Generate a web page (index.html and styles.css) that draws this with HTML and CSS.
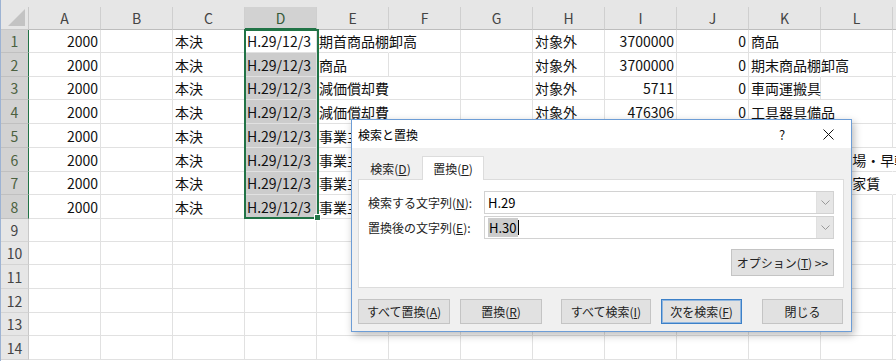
FILE: index.html
```html
<!DOCTYPE html>
<html lang="ja">
<head>
    <meta charset="UTF-8">
    <title>検索と置換</title>
    <link rel="stylesheet" href="styles.css">
</head>
<body>
    <div class="sheet">
        <div class="strip"></div>
        <div class="grid">
            <div class="corner"><span class="tri"></span></div>
            <div class="ch">A</div><div class="ch">B</div><div class="ch">C</div><div class="ch sel">D</div><div class="ch">E</div><div class="ch">F</div><div class="ch">G</div><div class="ch">H</div><div class="ch">I</div><div class="ch">J</div><div class="ch">K</div><div class="ch">L</div><div class="ch"></div>

            <div class="rh sel">1</div><div class="c n">2000</div><div class="c"></div><div class="c">本決</div><div class="c d act">H.29/12/3</div><div class="c over">期首商品棚卸高</div><div class="c"></div><div class="c"></div><div class="c">対象外</div><div class="c n">3700000</div><div class="c n">0</div><div class="c">商品</div><div class="c"></div><div class="c"></div>
            <div class="rh sel">2</div><div class="c n">2000</div><div class="c"></div><div class="c">本決</div><div class="c d">H.29/12/3</div><div class="c">商品</div><div class="c"></div><div class="c"></div><div class="c">対象外</div><div class="c n">3700000</div><div class="c n">0</div><div class="c over">期末商品棚卸高</div><div class="c"></div><div class="c"></div>
            <div class="rh sel">3</div><div class="c n">2000</div><div class="c"></div><div class="c">本決</div><div class="c d">H.29/12/3</div><div class="c over">減価償却費</div><div class="c"></div><div class="c"></div><div class="c">対象外</div><div class="c n">5711</div><div class="c n">0</div><div class="c">車両運搬具</div><div class="c"></div><div class="c"></div>
            <div class="rh sel">4</div><div class="c n">2000</div><div class="c"></div><div class="c">本決</div><div class="c d">H.29/12/3</div><div class="c over">減価償却費</div><div class="c"></div><div class="c"></div><div class="c">対象外</div><div class="c n">476306</div><div class="c n">0</div><div class="c over">工具器具備品</div><div class="c"></div><div class="c"></div>
            <div class="rh sel">5</div><div class="c n">2000</div><div class="c"></div><div class="c">本決</div><div class="c d">H.29/12/3</div><div class="c over">事業主貸</div><div class="c"></div><div class="c"></div><div class="c">対象外</div><div class="c n">120000</div><div class="c n">0</div><div class="c">現金</div><div class="c"></div><div class="c"></div>
            <div class="rh sel">6</div><div class="c n">2000</div><div class="c"></div><div class="c">本決</div><div class="c d">H.29/12/3</div><div class="c over">事業主貸</div><div class="c"></div><div class="c"></div><div class="c">対象外</div><div class="c n">86400</div><div class="c n">0</div><div class="c over">賃借料 月極駐車場・早朝</div><div class="c over"></div><div class="c"></div>
            <div class="rh sel">7</div><div class="c n">2000</div><div class="c"></div><div class="c">本決</div><div class="c d">H.29/12/3</div><div class="c over">事業主貸</div><div class="c"></div><div class="c"></div><div class="c">対象外</div><div class="c n">540000</div><div class="c n">0</div><div class="c over">地代 本社事務所家賃</div><div class="c over"></div><div class="c"></div>
            <div class="rh sel">8</div><div class="c n">2000</div><div class="c"></div><div class="c">本決</div><div class="c d">H.29/12/3</div><div class="c over">事業主借</div><div class="c"></div><div class="c"></div><div class="c">対象外</div><div class="c n">32000</div><div class="c n">0</div><div class="c">普通預金</div><div class="c"></div><div class="c"></div>
            <div class="rh">9</div><div class="c"></div><div class="c"></div><div class="c"></div><div class="c"></div><div class="c"></div><div class="c"></div><div class="c"></div><div class="c"></div><div class="c"></div><div class="c"></div><div class="c"></div><div class="c"></div><div class="c"></div>
            <div class="rh">10</div><div class="c"></div><div class="c"></div><div class="c"></div><div class="c"></div><div class="c"></div><div class="c"></div><div class="c"></div><div class="c"></div><div class="c"></div><div class="c"></div><div class="c"></div><div class="c"></div><div class="c"></div>
            <div class="rh">11</div><div class="c"></div><div class="c"></div><div class="c"></div><div class="c"></div><div class="c"></div><div class="c"></div><div class="c"></div><div class="c"></div><div class="c"></div><div class="c"></div><div class="c"></div><div class="c"></div><div class="c"></div>
            <div class="rh">12</div><div class="c"></div><div class="c"></div><div class="c"></div><div class="c"></div><div class="c"></div><div class="c"></div><div class="c"></div><div class="c"></div><div class="c"></div><div class="c"></div><div class="c"></div><div class="c"></div><div class="c"></div>
            <div class="rh">13</div><div class="c"></div><div class="c"></div><div class="c"></div><div class="c"></div><div class="c"></div><div class="c"></div><div class="c"></div><div class="c"></div><div class="c"></div><div class="c"></div><div class="c"></div><div class="c"></div><div class="c"></div>
            <div class="rh">14</div><div class="c"></div><div class="c"></div><div class="c"></div><div class="c"></div><div class="c"></div><div class="c"></div><div class="c"></div><div class="c"></div><div class="c"></div><div class="c"></div><div class="c"></div><div class="c"></div><div class="c"></div>
        </div>

        <div class="selection"></div>
        <div class="fill-handle"></div>

        <div class="dialog">
            <div class="titlebar">
                <span class="title">検索と置換</span>
                <span class="tb-btn">?</span>
                <span class="tb-btn">
                    <svg width="11" height="11" viewBox="0 0 11 11"><path d="M0.5 0.5L10.5 10.5M10.5 0.5L0.5 10.5" stroke="#111" stroke-width="1" fill="none"/></svg>
                </span>
            </div>
            <div class="dlg-body">
                <div class="tabs">
                    <div class="tab">検索(<u>D</u>)</div>
                    <div class="tab active">置換(<u>P</u>)</div>
                </div>
                <div class="panel">
                    <div class="field">
                        <label>検索する文字列(<u>N</u>):</label>
                        <div class="combo">
                            <span class="value">H.29</span>
                            <span class="drop"><svg width="9" height="5" viewBox="0 0 9 5"><path d="M0.5 0.5L4.5 4.5L8.5 0.5" stroke="#999" fill="none"/></svg></span>
                        </div>
                    </div>
                    <div class="field">
                        <label>置換後の文字列(<u>E</u>):</label>
                        <div class="combo">
                            <span class="value"><span class="hl">H.30</span><span class="caret"></span></span>
                            <span class="drop"><svg width="9" height="5" viewBox="0 0 9 5"><path d="M0.5 0.5L4.5 4.5L8.5 0.5" stroke="#999" fill="none"/></svg></span>
                        </div>
                    </div>
                    <div class="opt-row">
                        <div class="btn opt">オプション(<u>T</u>) &gt;&gt;</div>
                    </div>
                </div>
                <div class="buttons">
                    <div class="btn w92">すべて置換(<u>A</u>)</div>
                    <div class="btn w82 ml10">置換(<u>R</u>)</div>
                    <div class="btn w90 ml19">すべて検索(<u>I</u>)</div>
                    <div class="btn w81 ml10 default">次を検索(<u>F</u>)</div>
                    <div class="btn w81 ml20">閉じる</div>
                </div>
            </div>
        </div>
    </div>
</body>
</html>
```

FILE: styles.css
```css
* {
    padding: 0;
    margin: 0;
    box-sizing: border-box;
}

body {
    background: #fff;
    font-family: "Noto Sans CJK JP", "Noto Sans", sans-serif;
    color: #000;
}

.sheet {
    position: relative;
    width: 896px;
    height: 361px;
    overflow: hidden;
    border-left: 1px solid #9db3d3;
}

.strip {
    height: 7px;
    background: #e6e6e6;
}

.grid {
    display: grid;
    grid-template-columns: 28px repeat(13, 72px);
    grid-template-rows: 23px 23px 24px 23px 24px 24px 24px 23px 24px 23px 23px 24px 24px 23px 24px;
}

/* headers */
.corner {
    background: #e6e6e6;
    border-right: 1px solid #c8c8c8;
    border-bottom: 1px solid #c8c8c8;
    position: relative;
}

.corner .tri {
    position: absolute;
    right: 3px;
    bottom: 3px;
    width: 0;
    height: 0;
    border-left: 17px solid transparent;
    border-bottom: 17px solid #c3c3c3;
}

.ch {
    background: #e6e6e6;
    border-right: 1px solid #cfcfcf;
    border-bottom: 1px solid #bdbdbd;
    display: flex;
    align-items: center;
    justify-content: center;
    font-size: 14px;
    color: #444;
}

.ch.sel {
    background: #d2d2d2;
    color: #365a38;
    border-bottom: 2px solid #217346;
}

.rh {
    background: #e6e6e6;
    border-right: 1px solid #c8c8c8;
    border-bottom: 1px solid #d4d4d4;
    display: flex;
    align-items: center;
    justify-content: center;
    font-size: 14px;
    color: #444;
}

.rh.sel {
    background: #d2d2d2;
    color: #4b6140;
    border-right: 1px solid #217346;
    border-bottom-color: #c0c0c0;
}

/* cells */
.c {
    border-right: 1px solid #e1e1e1;
    border-bottom: 1px solid #e1e1e1;
    display: flex;
    align-items: center;
    padding: 0 2px;
    font-size: 14px;
    white-space: nowrap;
    color: #111;
}

.c.n {
    justify-content: flex-end;
}

.c.over {
    border-right-color: transparent;
}

.c.d {
    background: #cccccc;
}

.c.d.act {
    background: #fff;
}

.selection {
    position: absolute;
    left: 243px;
    top: 29px;
    width: 75px;
    height: 190px;
    border: 2px solid #217346;
}

.fill-handle {
    position: absolute;
    left: 313px;
    top: 214px;
    width: 7px;
    height: 7px;
    background: #217346;
    border: 1px solid #fff;
}

/* dialog */
.dialog {
    position: absolute;
    left: 350px;
    top: 119px;
    width: 501px;
    height: 213px;
    border: 1px solid #6d9dd6;
    background: #f0f0f0;
    box-shadow: 2px 3px 8px rgba(0, 0, 0, .28);
    font-size: 12px;
    color: #000;
}

.titlebar {
    height: 28px;
    background: #fff;
    display: flex;
    align-items: center;
    padding-left: 6px;
}

.title {
    flex: 1;
    font-size: 12px;
}

.tb-btn {
    width: 46px;
    height: 28px;
    display: flex;
    align-items: center;
    justify-content: center;
    font-size: 13px;
    color: #111;
}

.dlg-body {
    padding: 8px 7px 0 6px;
}

.tabs {
    display: flex;
    align-items: flex-end;
    height: 23px;
    padding-left: 1px;
}

.tab {
    height: 21px;
    width: 63px;
    display: flex;
    align-items: center;
    justify-content: center;
    color: #222;
}

.tab.active {
    height: 24px;
    width: 62px;
    background: #fff;
    border: 1px solid #dcdcdc;
    border-bottom: none;
    margin-bottom: -1px;
    position: relative;
    z-index: 1;
}

.panel {
    height: 109px;
    background: #fff;
    border: 1px solid #dcdcdc;
    padding: 11px 9px 0 9px;
}

.field {
    display: flex;
    align-items: center;
    height: 23px;
    margin-bottom: 2px;
}

.field label {
    width: 116px;
    color: #222;
}

.combo {
    flex: 1;
    height: 23px;
    border: 1px solid #d2d2d2;
    display: flex;
    align-items: stretch;
}

.combo .value {
    flex: 1;
    display: flex;
    align-items: center;
    padding-left: 3px;
    font-size: 13px;
}

.hl {
    background: #cccccc;
    padding: 0 1px;
}

.caret {
    display: inline-block;
    width: 1px;
    height: 15px;
    background: #000;
}

.drop {
    width: 17px;
    background: #e6e6e6;
    border-left: 1px solid #e0e0e0;
    display: flex;
    align-items: center;
    justify-content: center;
}

.opt-row {
    display: flex;
    justify-content: flex-end;
    margin-top: 10px;
}

.btn {
    height: 25px;
    background: #e1e1e1;
    border: 1px solid #c4c4c4;
    display: flex;
    align-items: center;
    justify-content: center;
    color: #222;
}

.btn.opt {
    width: 103px;
    height: 27px;
}

.btn.default {
    border: 1px solid #3c80c8;
    box-shadow: inset 0 0 0 1px #8fb6e0;
}

.buttons {
    display: flex;
    margin-top: 11px;
}

.w92 { width: 92px; }
.w82 { width: 82px; }
.w90 { width: 90px; }
.w81 { width: 81px; }
.ml10 { margin-left: 10px; }
.ml19 { margin-left: 19px; }
.ml20 { margin-left: 20px; }
```
